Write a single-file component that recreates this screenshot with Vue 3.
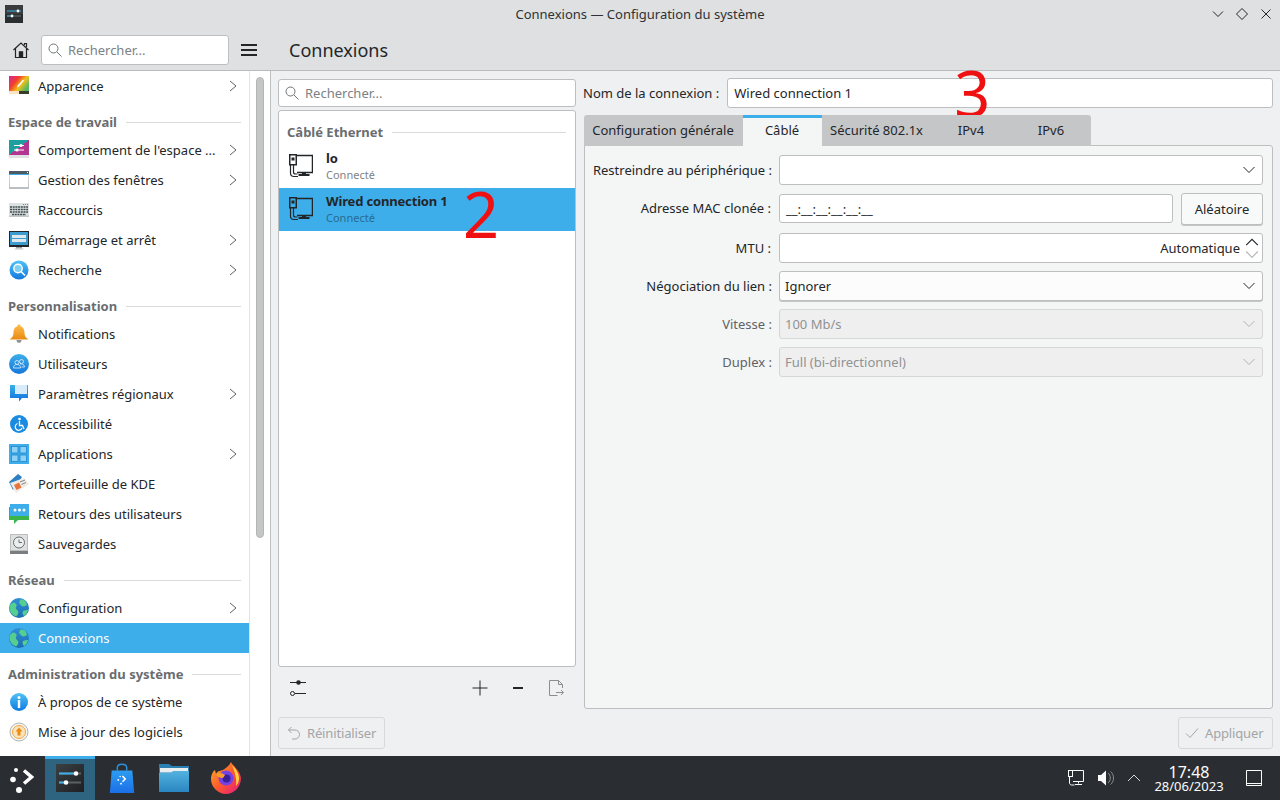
<script setup>
// 設定画面のナビゲーション
const NAV_GROUPS = [
  { title: null, items: [{ label: 'Apparence', icon: 'apparence', more: true }] },
  {
    title: 'Espace de travail',
    items: [
      { label: "Comportement de l'espace ...", icon: 'comportement', more: true },
      { label: 'Gestion des fenêtres', icon: 'fenetres', more: true },
      { label: 'Raccourcis', icon: 'raccourcis' },
      { label: 'Démarrage et arrêt', icon: 'demarrage', more: true },
      { label: 'Recherche', icon: 'recherche', more: true }
    ]
  },
  {
    title: 'Personnalisation',
    items: [
      { label: 'Notifications', icon: 'notifications' },
      { label: 'Utilisateurs', icon: 'utilisateurs' },
      { label: 'Paramètres régionaux', icon: 'regionaux', more: true },
      { label: 'Accessibilité', icon: 'accessibilite' },
      { label: 'Applications', icon: 'applications', more: true },
      { label: 'Portefeuille de KDE', icon: 'portefeuille' },
      { label: 'Retours des utilisateurs', icon: 'retours' },
      { label: 'Sauvegardes', icon: 'sauvegardes' }
    ]
  },
  {
    title: 'Réseau',
    items: [
      { label: 'Configuration', icon: 'globe', more: true },
      { label: 'Connexions', icon: 'globe', active: true }
    ]
  },
  {
    title: 'Administration du système',
    items: [
      { label: 'À propos de ce système', icon: 'info' },
      { label: 'Mise à jour des logiciels', icon: 'update' }
    ]
  }
];

const CONNECTIONS = [
  { name: 'lo', state: 'Connecté' },
  { name: 'Wired connection 1', state: 'Connecté', selected: true }
];

const TABS = [
  { label: 'Configuration générale', width: 159 },
  { label: 'Câblé', width: 79, active: true },
  { label: 'Sécurité 802.1x', width: 109 },
  { label: 'IPv4', width: 80 },
  { label: 'IPv6', width: 80 }
];

// アイコンの中身 (viewBox 0 0 20 20)
const ICONS = {
  apparence: `<defs><linearGradient id="ap" x1="0" y1="0" x2="1" y2="0.6"><stop offset="0" stop-color="#d6249f"/><stop offset=".4" stop-color="#f0402a"/><stop offset=".7" stop-color="#f2c21a"/><stop offset="1" stop-color="#5cb85c"/></linearGradient></defs>
    <rect y="0" width="20" height="15" fill="url(#ap)"/><rect y="15" width="10" height="3" fill="#fbe3c6"/><rect x="10" y="15" width="10" height="3" fill="#3b3b2c"/>
    <path d="M14 3.500l1 1-5 6-2 1 .6-2z" fill="#fff"/>`,
  comportement: `<defs><linearGradient id="co" x1="0" y1="0" x2="1" y2="1"><stop offset=".5" stop-color="#1f9e9e"/><stop offset=".5" stop-color="#b3358f"/></linearGradient></defs>
    <rect y="0" width="20" height="15" fill="url(#co)"/><rect y="15" width="20" height="3" fill="#dfe1e2"/>
    <path d="M5 5.500h10M5 10h10" stroke="#fff" stroke-width="1"/><circle cx="12" cy="5.500" r="1.600" fill="#fff"/><circle cx="8" cy="10" r="1.600" fill="#fff"/>`,
  fenetres: `<defs><linearGradient id="fe" x1="0" y1="0" x2="0" y2="1"><stop offset="0" stop-color="#e6e8e9"/><stop offset="1" stop-color="#b9bdbf"/></linearGradient></defs>
    <rect x="0" y="1" width="20" height="18" fill="url(#fe)"/><rect x="1" y="5" width="18" height="12" fill="#fff"/><rect x="0" y="1" width="20" height="3" fill="#4d5a63"/><rect x="0" y="4" width="20" height="1" fill="#3daee9"/><rect x="18" y="2" width="1" height="1" fill="#fff"/>`,
  raccourcis: `<rect y="3" width="20" height="14" fill="#dbe2e1"/><rect y="15.500" width="20" height="1.500" fill="#c2c9c8"/>
    <path d="M1 7h18M1 9.500h18M1 12h18M3 14.500h14" stroke="#3f4a4e" stroke-width="1.700" stroke-dasharray="2 .7"/><path d="M14 4.500h5" stroke="#2fb39a" stroke-width="1" stroke-dasharray="1 1"/>`,
  demarrage: `<rect y="1" width="20" height="16" fill="#232629"/><rect x="1" y="2" width="18" height="13" fill="#3d9bd0"/><rect x="3" y="5" width="14" height="3" fill="#dfe8ec"/><rect x="3" y="9" width="14" height="3" fill="#dfe8ec"/><rect x="7" y="17" width="6" height="1.500" fill="#9aa0a3"/><rect x="5.500" y="18.500" width="9" height="1" fill="#c5c8ca"/>`,
  recherche: `<defs><linearGradient id="re" x1="0" y1="0" x2="0" y2="1"><stop offset="0" stop-color="#4fc3f7"/><stop offset="1" stop-color="#1477dc"/></linearGradient></defs>
    <circle cx="10" cy="10" r="9.500" fill="url(#re)"/><circle cx="9" cy="8.500" r="4.200" fill="#7fd0f5" stroke="#fff" stroke-width="1.400"/><path d="M12 11.500l4 4" stroke="#fff" stroke-width="1.600"/>`,
  notifications: `<defs><linearGradient id="no" x1="0" y1="0" x2="0" y2="1"><stop offset="0" stop-color="#fdbc4b"/><stop offset="1" stop-color="#e98a15"/></linearGradient></defs>
    <path d="M10 .5c1 0 1.600.7 1.600 1.700C14.500 3 15.500 6 15.500 9c0 3 1.500 5 4 6.500H.5C3 14 4.500 12 4.500 9c0-3 1-6 3.900-6.800C8.400 1.200 9 .5 10 .5z" fill="url(#no)"/><path d="M7.500 16h5c0 2-1.200 2.800-2.500 2.800S7.500 18 7.500 16z" fill="#8f9396"/>`,
  utilisateurs: `<defs><linearGradient id="ut" x1="0" y1="0" x2="0" y2="1"><stop offset="0" stop-color="#3daee9"/><stop offset="1" stop-color="#1477dc"/></linearGradient></defs>
    <circle cx="10" cy="10" r="10" fill="url(#ut)"/><g fill="none" stroke="#cfe9fb" stroke-width=".9"><circle cx="8" cy="8.500" r="2"/><circle cx="12.500" cy="7.500" r="2"/><path d="M4.500 14c0-2.500 1.500-3.500 3.500-3.500s3.500 1 3.500 3.500z"/><path d="M11 10c2-.5 4.500.5 4.500 3h-3"/></g>`,
  regionaux: `<defs><linearGradient id="rg" x1="0" y1="0" x2="0" y2="1"><stop offset="0" stop-color="#3daee9"/><stop offset="1" stop-color="#0f6fe0"/></linearGradient></defs>
    <path d="M1 1h18v13h-6l-3 3.500V14H1z" fill="url(#rg)"/><path d="M6 1h12v9H6z" fill="#d6ecfa"/>`,
  accessibilite: `<circle cx="10" cy="10" r="9" fill="#1a8be0"/><circle cx="10.500" cy="5" r="1.300" fill="#fff"/><path d="M10.500 7v4.500h3l1.500 3.500" fill="none" stroke="#fff" stroke-width="1.300"/><path d="M8.500 9.500a3.500 3.500 0 1 0 4.500 4.500" fill="none" stroke="#fff" stroke-width="1.200"/>`,
  applications: `<rect width="20" height="20" fill="#3daee9"/><g fill="#8fd1f5" stroke="#1d88d0" stroke-width=".8"><rect x="2.500" y="2.500" width="6.500" height="6.500"/><rect x="11" y="2.500" width="6.500" height="6.500"/><rect x="2.500" y="11" width="6.500" height="6.500"/><rect x="11" y="11" width="6.500" height="6.500"/></g>`,
  portefeuille: `<path d="M0 8L9 0l4 3L4 16z" fill="#2f7fc4"/><path d="M1 9l14-5 5 6-13 9z" fill="#ecebe6"/><path d="M5 11l5-2.500 2.500 5L7.500 16z" fill="#e8743b"/><path d="M11 8l5-2M12.500 10.500l4.500-2" stroke="#777" stroke-width=".9"/>`,
  retours: `<path d="M0 3h20v13H9l-4 4v-4H0z" fill="#3bb54a"/><rect x="1" y="0" width="19" height="12" fill="#3daee9"/><g fill="#fff"><circle cx="6" cy="6" r="1.500"/><circle cx="10.500" cy="6" r="1.500"/><circle cx="15" cy="6" r="1.500"/></g>`,
  sauvegardes: `<rect x="1" y="0" width="18" height="20" rx="1" fill="#b9bdbe"/><rect x="2" y="1" width="16" height="15" fill="#dfe1e1"/><circle cx="10" cy="8.500" r="5.500" fill="#eceded" stroke="#6a6e70" stroke-width="1"/><path d="M10 5.500v3h3" fill="none" stroke="#6a6e70"/><rect x="1" y="17" width="18" height="3" fill="#7a7e80"/>`,
  globe: `<defs><linearGradient id="gl" x1="0" y1="0" x2="0" y2="1"><stop offset="0" stop-color="#2f8fd8"/><stop offset="1" stop-color="#1c6db0"/></linearGradient></defs><circle cx="10" cy="10" r="10" fill="url(#gl)"/><path d="M1 7c2-2 3-3 5-2s2 3 1 4 1 3 2 4 0 4-2 5.500C3 17 0 13 .5 9zM11 2c2-1 5 0 6 2l1 3c-2 1-3 2-5 1s-1-2-3-3zM14 13c2-1 4-1 5-1-.5 3-2 5-4 6-1-1-2-3-1-5z" fill="#55cf8f"/>`,
  info: `<defs><linearGradient id="in" x1="0" y1="0" x2="0" y2="1"><stop offset="0" stop-color="#4fc3f7"/><stop offset="1" stop-color="#0f7ae0"/></linearGradient></defs>
    <circle cx="10" cy="10" r="9" fill="url(#in)"/><rect x="8.800" y="8" width="2.400" height="8" fill="#fff"/><circle cx="10" cy="5.500" r="1.500" fill="#fff"/>`,
  update: `<circle cx="10" cy="10" r="9" fill="#f4f4f2" stroke="#b0b3b4" stroke-width="1"/><circle cx="10" cy="10" r="6.500" fill="#fbe3bd" stroke="#f0a63c"/><path d="M10 5.500l3.500 4h-2v4h-3v-4h-2z" fill="#ee8b12"/>`
};
</script>

<template>
  <div class="desktop">
    <header class="titlebar">
      <svg class="app-icon" viewBox="0 0 18 18">
        <rect width="18" height="18" fill="#2b2e31" />
        <rect x="0" y="0" width="18" height="9" fill="#3a3d40" />
        <path d="M2 6h14" stroke="#3daee9" stroke-width="1" />
        <path d="M2 11h14" stroke="#6b7074" stroke-width="1" />
        <path d="M2 11h5" stroke="#3daee9" stroke-width="1" />
        <circle cx="13" cy="6" r="1.400" fill="#fff" />
        <circle cx="7" cy="11" r="1.400" fill="#fff" />
      </svg>
      <span class="title">Connexions — Configuration du système</span>
      <div class="win-buttons">
        <svg viewBox="0 0 12 12"><path d="M1 3.500l5 5 5-5" /></svg>
        <svg viewBox="0 0 12 12"><path d="M6 .5l5.500 5.500L6 11.500.5 6z" /></svg>
        <svg viewBox="0 0 12 12"><path d="M1.500 1.500l9 9M10.500 1.500l-9 9" /></svg>
      </div>
    </header>

    <div class="toolbar">
      <div class="toolbar-left">
        <svg class="home" viewBox="0 0 16 16">
          <path d="M.5 8L8 1l7.500 7M2.500 6.500v9h4V10h3v5.500h4v-9M11.500 3V1.500h2v3.500" />
          <rect x="6.500" y="10" width="3" height="5.500" fill="#232629" />
        </svg>
        <div class="field search side-search">
          <svg class="search-icon" viewBox="0 0 14 14"><circle cx="5.500" cy="5.500" r="4.500" /><path d="M9 9l4.500 4.500" /></svg>
          <span class="placeholder">Rechercher...</span>
        </div>
        <div class="hamburger"><i></i><i></i><i></i></div>
      </div>
      <h1 class="page-title">Connexions</h1>
    </div>

    <div class="main">
      <aside class="sidebar">
        <nav class="nav">
          <section v-for="(group, i) in NAV_GROUPS" :key="i">
            <div v-if="group.title" class="nav-heading">
              <span>{{ group.title }}</span><i></i>
            </div>
            <div
              v-for="item in group.items"
              :key="item.label"
              class="nav-item"
              :class="{ active: item.active }"
            >
              <svg class="nav-icon" viewBox="0 0 20 20" v-html="ICONS[item.icon]"></svg>
              <span class="nav-label">{{ item.label }}</span>
              <svg v-if="item.more" class="nav-more" viewBox="0 0 8 12"><path d="M1 1l6 5-6 5" /></svg>
            </div>
          </section>
        </nav>
        <div class="scroll-col"><div class="scroll-thumb"></div></div>
      </aside>

      <main class="content">
        <div class="columns">
          <div class="list-col">
            <div class="field search list-search">
              <svg class="search-icon" viewBox="0 0 14 14"><circle cx="5.500" cy="5.500" r="4.500" /><path d="M9 9l4.500 4.500" /></svg>
              <span class="placeholder">Rechercher...</span>
            </div>
            <div class="conn-list">
              <div class="nav-heading conn-heading"><span>Câblé Ethernet</span><i></i></div>
              <div
                v-for="conn in CONNECTIONS"
                :key="conn.name"
                class="conn-item"
                :class="{ selected: conn.selected }"
              >
                <svg class="conn-icon" viewBox="0 0 24 24">
                  <path d="M8 1.500h15.500v17H8" fill="none" stroke="#232629" stroke-width="1.500" />
                  <path d="M13 18.500h4v1.500h-4z" fill="#232629" />
                  <path d="M9.500 20h11v2h-11z" fill="#232629" />
                  <rect x=".75" y=".75" width="6.500" height="10" fill="none" stroke="#232629" stroke-width="1.500" />
                  <rect x="2.500" y="3.500" width="3" height="3" fill="#232629" />
                  <path d="M1.500 11v8c0 2 1.500 3.500 3.500 3.500h4M4.500 11v7c0 1.500 1 2 2 2h2" fill="none" stroke="#232629" stroke-width="1.200" />
                </svg>
                <div class="conn-text">
                  <div class="conn-name">{{ conn.name }}</div>
                  <div class="conn-state">{{ conn.state }}</div>
                </div>
                <span v-if="conn.selected" class="mark mark-two">2</span>
              </div>
            </div>
            <div class="list-tools">
              <svg class="tool tool-sliders" viewBox="0 0 16 16">
                <path d="M0 2.500h16M5 13.500h11" fill="none" stroke="#232629" />
                <circle cx="8.500" cy="2.500" r="2.300" fill="#232629" />
                <circle cx="2.500" cy="13.500" r="2" fill="#eff0f1" stroke="#232629" />
              </svg>
              <div class="tools-right">
                <svg class="tool" viewBox="0 0 16 16"><path d="M8 .5v15M.5 8h15" stroke="#232629" fill="none" /></svg>
                <svg class="tool" viewBox="0 0 16 16"><path d="M3 8h10" stroke="#232629" stroke-width="2" fill="none" /></svg>
                <svg class="tool" viewBox="0 0 16 16">
                  <path d="M14.500 8V4.500l-4-4H1.500v15h8M10.500.5v4h4M8 12.500h7.500M13 10l2.500 2.500L13 15" fill="none" stroke="#8b8e90" />
                </svg>
              </div>
            </div>
          </div>

          <div class="detail-col">
            <div class="name-row">
              <label>Nom de la connexion :</label>
              <div class="field name-field">
                Wired connection 1
                <span class="mark mark-three">3</span>
              </div>
            </div>

            <div class="tabs">
              <div
                v-for="tab in TABS"
                :key="tab.label"
                class="tab"
                :class="{ active: tab.active }"
                :style="{ width: tab.width + 'px' }"
              >{{ tab.label }}</div>
            </div>

            <div class="tab-panel">
              <div class="form">
                <label class="first-label">Restreindre au périphérique :</label>
                <div class="field combo">
                  <span></span>
                  <svg class="chev" viewBox="0 0 12 8"><path d="M.5 1l5.500 5.500L11.500 1" /></svg>
                </div>

                <label class="mac-label">Adresse MAC clonée :</label>
                <div class="mac-row">
                  <div class="field mac-field">__:__:__:__:__:__</div>
                  <button class="btn random-btn">Aléatoire</button>
                </div>

                <label>MTU :</label>
                <div class="field spin">
                  <span>Automatique</span>
                  <svg class="spin-arrows" viewBox="0 0 12 20">
                    <path d="M1 7.500l5-5 5 5" stroke="#232629" />
                    <path d="M1 13l5 5 5-5" stroke="#b5b7b9" />
                  </svg>
                </div>

                <label class="nego-label">Négociation du lien :</label>
                <div class="field combo combo-raised">
                  <span>Ignorer</span>
                  <svg class="chev" viewBox="0 0 12 8"><path d="M.5 1l5.500 5.500L11.500 1" /></svg>
                </div>

                <label class="off-label">Vitesse :</label>
                <div class="field combo disabled">
                  <span>100 Mb/s</span>
                  <svg class="chev" viewBox="0 0 12 8"><path d="M.5 1l5.500 5.500L11.500 1" /></svg>
                </div>

                <label class="off-label">Duplex :</label>
                <div class="field combo disabled">
                  <span>Full (bi-directionnel)</span>
                  <svg class="chev" viewBox="0 0 12 8"><path d="M.5 1l5.500 5.500L11.500 1" /></svg>
                </div>
              </div>
            </div>
          </div>
        </div>

        <div class="footer">
          <button class="btn footer-btn reset-btn">
            <svg viewBox="0 0 14 14"><path d="M4.500 1L1.500 4l3 3M1.500 4H8a4.500 4.500 0 0 1 0 9H5" /></svg>
            Réinitialiser
          </button>
          <button class="btn footer-btn apply-btn">
            <svg viewBox="0 0 14 14"><path d="M1 7.500l4 4 8-9" /></svg>
            Appliquer
          </button>
        </div>
      </main>
    </div>

    <footer class="taskbar">
      <svg class="launcher" viewBox="0 0 34 30">
        <circle cx="13" cy="16.500" r="2.800" fill="#fff" />
        <circle cx="16" cy="7" r="2" fill="#fff" />
        <circle cx="19" cy="27" r="3" fill="#fff" />
        <path d="M24 7.500l7.500 6.500-7.500 6.500" fill="none" stroke="#fff" stroke-width="3.500" />
      </svg>
      <div class="task active">
        <svg viewBox="0 0 28 28">
          <defs>
            <linearGradient id="st" x1="0" y1="0" x2="1" y2="1">
              <stop offset="0" stop-color="#3c4043" /><stop offset="1" stop-color="#1d1f21" />
            </linearGradient>
          </defs>
          <rect width="28" height="28" fill="url(#st)" />
          <path d="M3 9.500h22M3 18.500h22" stroke="#5b6064" stroke-width="2" />
          <path d="M3 9.500h17M3 18.500h8" stroke="#3daee9" stroke-width="2" />
          <circle cx="20" cy="9.500" r="2.300" fill="#fff" />
          <circle cx="10" cy="18.500" r="2.300" fill="#fff" />
        </svg>
      </div>
      <div class="task">
        <svg viewBox="0 0 28 32">
          <defs>
            <linearGradient id="bag" x1="0" y1="0" x2="0" y2="1">
              <stop offset="0" stop-color="#2d9cf0" /><stop offset="1" stop-color="#1b6fe8" />
            </linearGradient>
          </defs>
          <path d="M9 8V5c0-5 10-5 10 0v3" fill="none" stroke="#2d8fd8" stroke-width="1.600" />
          <path d="M3 8h22l2 24H1z" fill="url(#bag)" />
          <path d="M14.500 14l3 3-3 3" fill="none" stroke="#fff" stroke-width="1.600" />
          <circle cx="10" cy="18" r="1" fill="#fff" /><circle cx="12" cy="14.500" r=".8" fill="#fff" /><circle cx="13" cy="22" r="1" fill="#fff" />
        </svg>
      </div>
      <div class="task">
        <svg viewBox="0 0 30 28" class="wide">
          <defs>
            <linearGradient id="fo" x1="0" y1="0" x2="0" y2="1">
              <stop offset="0" stop-color="#52b2e0" /><stop offset="1" stop-color="#2b86c0" />
            </linearGradient>
          </defs>
          <path d="M0 0h10l3 2h17v26H0z" fill="#2a7fb3" />
          <rect x="1" y="4" width="28" height="4.500" fill="#e8eef0" />
          <path d="M0 9h12l2-2h16v21H0z" fill="url(#fo)" />
        </svg>
      </div>
      <div class="task">
        <svg viewBox="0 0 30 32" class="wide">
          <defs>
            <linearGradient id="ff" x1="0" y1="0" x2="1" y2="1">
              <stop offset="0" stop-color="#ffb627" /><stop offset=".5" stop-color="#ff5a2c" /><stop offset="1" stop-color="#e31587" />
            </linearGradient>
          </defs>
          <path d="M20 0c1 3 9 8 10 16 0 9-7 16-15 16S0 25 0 17c0-4 2-8 4-9l1 4c2-4 5-3 7-4 3-2 6-4 8-8z" fill="url(#ff)" />
          <path d="M21 3c3 3 7 8 7 13 0 3-1 6-3 8 1-6-1-14-4-21z" fill="#ffd43a" />
          <circle cx="15" cy="16" r="7.500" fill="#7542e5" />
          <circle cx="15.500" cy="16.500" r="4" fill="#3a1f96" />
          <path d="M5 12c3-2 7-1 9 1l-2 3c-3 0-5-1-7-4z" fill="#ff9d2c" />
        </svg>
      </div>

      <div class="tray">
        <svg class="tray-net" viewBox="0 0 16 16">
          <path d="M5 .5h10.500v11H5M10.500 11.500v2M7 14.500h7" fill="none" stroke="#fcfcfc" />
          <rect x=".5" y=".5" width="4" height="6" fill="#2a2e32" stroke="#fcfcfc" />
          <path d="M1.500 7v6c0 1 1 2 2 2h3" fill="none" stroke="#fcfcfc" />
        </svg>
        <svg class="tray-vol" viewBox="0 0 16 16">
          <path d="M0 5h3l5-4.500v15L3 11H0z" fill="#fcfcfc" />
          <path d="M10 3c3 2 3 8 0 10M12.500 1.500c4 3 4 10 0 13" fill="none" stroke="#8a8d90" />
        </svg>
        <svg class="tray-up" viewBox="0 0 14 8"><path d="M1 7l6-6 6 6" /></svg>
        <div class="clock">
          <div class="time">17:48</div>
          <div class="date">28/06/2023</div>
        </div>
        <svg class="tray-desk" viewBox="0 0 16 16">
          <path d="M.5.500h15v15H.5z" fill="none" stroke="#fcfcfc" />
          <path d="M1 13.500h14" stroke="#fcfcfc" />
        </svg>
      </div>
    </footer>
  </div>
</template>

<style scoped>
.desktop {
  width: 1280px;
  height: 800px;
  display: flex;
  flex-direction: column;
  overflow: hidden;
  background: #eff0f1;
  color: #232629;
  font-family: "Noto Sans", sans-serif;
  font-size: 13px;
}

/* タイトルバー */
.titlebar {
  height: 29px;
  flex: none;
  display: flex;
  align-items: center;
  justify-content: center;
  position: relative;
  background: #dee0e2;
  padding-bottom: 2px;
  box-sizing: border-box;
}
.title { color: #2f3235; }
.app-icon { position: absolute; left: 5px; top: 5px; width: 18px; height: 18px; }
.win-buttons { position: absolute; right: 8px; top: 8px; display: flex; gap: 12px; }
.win-buttons svg { width: 12px; height: 12px; fill: none; stroke: #232629; }

/* ツールバー */
.toolbar {
  height: 42px;
  flex: none;
  display: flex;
  background: #dee0e2;
  border-bottom: 1px solid #b9bbbd;
  box-sizing: border-box;
}
.toolbar-left {
  width: 271px;
  display: flex;
  align-items: center;
  padding: 0 13px;
  box-sizing: border-box;
}
.home { width: 16px; height: 16px; fill: none; stroke: #232629; stroke-width: 1.2; margin-right: 12px; }
.hamburger { margin-left: 12px; width: 16px; display: flex; flex-direction: column; gap: 3px; }
.hamburger i { display: block; height: 2px; background: #232629; }
.page-title { margin: 0 0 0 18px; font-size: 18px; font-weight: 400; line-height: 43px; color: #232629; }

/* 入力欄 */
.field {
  height: 30px;
  box-sizing: border-box;
  display: flex;
  align-items: center;
  background: #fff;
  border: 1px solid #bcbebf;
  border-radius: 3px;
  padding: 0 6px;
}
.search { gap: 6px; }
.side-search { width: 188px; }
.list-search { height: 28px; }
.search-icon { width: 14px; height: 14px; fill: none; stroke: #6f7375; stroke-width: 1; flex: none; }
.placeholder { color: #7b8185; }

.main { flex: 1; min-height: 0; display: flex; }

/* サイドバー */
.sidebar {
  width: 271px;
  flex: none;
  display: flex;
  box-sizing: border-box;
  background: #fff;
  border-right: 1px solid #bcbebf;
}
.nav { width: 249px; flex: none; border-right: 1px solid #e2e3e4; box-sizing: content-box; }
.nav-heading {
  height: 34px;
  display: flex;
  align-items: center;
  gap: 9px;
  padding: 8px 8px 0 8px;
  box-sizing: border-box;
  font-weight: 700;
  color: #6a6d70;
}
.nav-heading i { flex: 1; height: 1px; background: #d8dadb; }
.nav-item {
  height: 30px;
  display: flex;
  align-items: center;
  padding: 0 12px 0 9px;
}
.nav-item.active { background: #3daee9; color: #fcfcfc; }
.nav-icon { width: 20px; height: 20px; flex: none; margin-right: 9px; }
.nav-label { flex: 1; white-space: nowrap; overflow: hidden; }
.nav-more { width: 8px; height: 12px; fill: none; stroke: #5c6063; flex: none; }
.scroll-col { flex: 1; padding: 6px 6px 0 6px; }
.scroll-thumb { height: 461px; border-radius: 4px; background: #c5c7c7; border: 1px solid #b4b6b6; box-sizing: border-box; }

/* メイン領域 */
.content {
  flex: 1;
  min-width: 0;
  display: flex;
  flex-direction: column;
  padding: 7px;
  box-sizing: border-box;
}
.columns { flex: 1; min-height: 0; display: flex; gap: 7px; }
.list-col { width: 298px; flex: none; display: flex; flex-direction: column; padding-top: 1px; }
.conn-list {
  flex: 1;
  margin-top: 3px;
  background: #fff;
  border: 1px solid #bcbebf;
  border-radius: 3px;
}
.conn-heading { padding: 8px 9px 0 8px; }
.conn-item {
  height: 43px;
  display: flex;
  align-items: center;
  padding-left: 10px;
  position: relative;
}
.conn-item.selected { background: #3daee9; }
.conn-icon { width: 24px; height: 24px; flex: none; margin-right: 13px; margin-bottom: 1px; }
.conn-text { padding-bottom: 2px; }
.conn-name { font-weight: 700; line-height: 18px; letter-spacing: -0.16px; }
.conn-state { font-size: 11px; line-height: 15px; color: #7f8385; }
.selected .conn-state { color: #2a6b91; }
.mark {
  position: absolute;
  color: #ef1111;
  font-size: 63px;
  line-height: 46px;
  font-weight: 400;
}
.mark-two { left: 184px; top: 3px; }
.mark-three { left: 226px; top: -9px; }

.list-tools {
  height: 42px;
  flex: none;
  display: flex;
  align-items: center;
  justify-content: space-between;
  padding: 0 12px;
}
.tool { width: 16px; height: 16px; display: block; }
.tools-right { display: flex; gap: 22px; }

.detail-col { flex: 1; min-width: 0; display: flex; flex-direction: column; }
.name-row { display: flex; align-items: center; gap: 8px; }
.name-field { flex: 1; position: relative; }
.tabs { display: flex; margin: 7px 0 0 1px; height: 31px; position: relative; z-index: 1; }
.tab {
  height: 31px;
  box-sizing: border-box;
  display: flex;
  align-items: center;
  justify-content: center;
  background: #c5c6c8;
  white-space: nowrap;
  padding-bottom: 2px;
}
.tab:first-child { border-top-left-radius: 3px; padding-right: 1px; }
.tab:last-child { border-top-right-radius: 3px; }
.tab.active { background: #f4f5f5; border-top: 3px solid #3daee9; padding-bottom: 5px; padding-right: 1px; }
.tab-panel {
  flex: 1;
  margin: -1px 0 0 1px;
  background: #f4f5f5;
  border: 1px solid #bcbebf;
  border-radius: 0 3px 3px 3px;
  padding: 9px 9px 0 0;
}
.form {
  display: grid;
  grid-template-columns: 187px 1fr;
  column-gap: 7px;
  row-gap: 8px;
  align-items: center;
}
.form label { text-align: right; white-space: nowrap; padding-right: 1px; }
.form .first-label { padding-right: 0; }
.form .mac-label { padding-bottom: 2px; }
.form .nego-label { padding-right: 0; }
.form .off-label { color: #5f6365; padding-right: 0; }
.mac-row { display: flex; align-items: flex-start; gap: 8px; height: 32px; }
.mac-field { flex: 1; height: 29px; margin-top: 1px; }
.combo, .spin { justify-content: space-between; }
.combo { padding-left: 5px; }
.spin { padding-right: 3px; justify-content: flex-end; gap: 5px; }
.spin-arrows { width: 14px; height: 24px; fill: none; }
.chev { width: 12px; height: 8px; fill: none; stroke: #232629; margin-right: 1px; }
.combo-raised { background: #fcfcfc; box-shadow: 0 1px 0 #c4c6c7; }
.disabled { background: #efefef; border-color: #d5d6d7; color: #8f9294; }
.disabled .chev { stroke: #b0b2b4; }

/* ボタン */
.btn {
  font: inherit;
  color: #232629;
  background: #fcfcfc;
  border: 1px solid #bcbebf;
  border-radius: 3px;
  padding: 0;
}
.random-btn { width: 82px; height: 32px; background: #f8f9f9; box-shadow: 0 1px 0 #c4c6c7; }
.footer { height: 32px; flex: none; margin-top: 8px; display: flex; justify-content: space-between; }
.footer-btn {
  display: flex;
  align-items: center;
  gap: 6px;
  padding: 0 8px;
  height: 32px;
  background: #eff0f1;
  border-color: #d6d8d9;
  color: #a2a5a7;
  letter-spacing: -0.15px;
  white-space: nowrap;
}
.reset-btn { width: 107px; }
.apply-btn { width: 95px; padding-left: 6px; }
.footer-btn svg { width: 14px; height: 14px; fill: none; stroke: #a2a5a7; flex: none; }

/* タスクバー */
.taskbar {
  height: 44px;
  flex: none;
  display: flex;
  align-items: center;
  background: #2a2e32;
  color: #fcfcfc;
}
.launcher { width: 34px; height: 30px; margin: 0 9px 0 0; flex: none; }
.task {
  width: 50px;
  height: 44px;
  flex: none;
  margin-left: 2px;
  box-sizing: border-box;
  display: flex;
  align-items: center;
  justify-content: center;
}
.task svg { width: 28px; height: 30px; }
.task svg.wide { width: 30px; height: 32px; }
.task.active { background: #2f6480; border-top: 3px solid #3daee9; padding-bottom: 3px; }
.tray { margin-left: auto; display: flex; align-items: center; height: 44px; }
.tray-net { width: 16px; height: 16px; margin-right: 14px; }
.tray-vol { width: 16px; height: 16px; margin-right: 13px; }
.tray-up { width: 14px; height: 8px; fill: none; stroke: #d5d7d8; margin-right: 13px; }
.clock { width: 70px; text-align: center; margin-right: 22px; }
.time { font-size: 16px; line-height: 16px; }
.date { font-size: 13px; line-height: 12px; }
.tray-desk { width: 16px; height: 16px; margin-right: 18px; }
</style>
